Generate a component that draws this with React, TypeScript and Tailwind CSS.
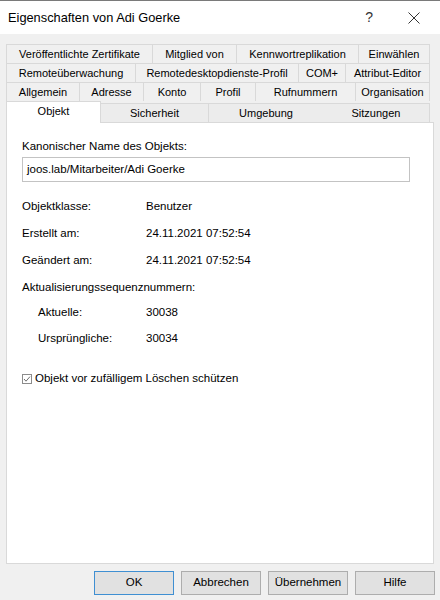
const tabRows: { label: string; w: number }[][] = [
  [
    { label: "Veröffentlichte Zertifikate", w: 146 },
    { label: "Mitglied von", w: 84 },
    { label: "Kennwortreplikation", w: 122 },
    { label: "Einwählen", w: 72 },
  ],
  [
    { label: "Remoteüberwachung", w: 129 },
    { label: "Remotedesktopdienste-Profil", w: 163 },
    { label: "COM+", w: 47 },
    { label: "Attribut-Editor", w: 85 },
  ],
  [
    { label: "Allgemein", w: 73 },
    { label: "Adresse", w: 64 },
    { label: "Konto", w: 57 },
    { label: "Profil", w: 55 },
    { label: "Rufnummern", w: 100 },
    { label: "Organisation", w: 75 },
  ],
];

const bottomTabs = [
  { label: "Sicherheit", w: 107 },
  { label: "Umgebung", w: 115 },
  { label: "Sitzungen", w: 107 },
];

function Tab({ label, w, last }: { label: string; w: number; last: boolean }) {
  return (
    <div
      className={`flex h-[19px] items-center justify-center border-t border-l border-[#d9d9d9] bg-[#f0f0f0] text-[11px] leading-none ${
        last ? "border-r" : ""
      }`}
      style={{ width: w }}
    >
      {label}
    </div>
  );
}

function InfoRow({ label, value, indent, className }: { label: string; value: string; indent?: boolean; className: string }) {
  return (
    <div className={`flex h-[16px] items-center ${className}`}>
      <div className={indent ? "w-[124px] pl-[16px]" : "w-[124px]"}>{label}</div>
      <div>{value}</div>
    </div>
  );
}

function Button({ label, primary }: { label: string; primary?: boolean }) {
  return (
    <button
      className={`h-[24px] w-[80px] border bg-[#e1e1e1] text-[11.5px] text-black ${
        primary ? "border-[#3f8fd2]" : "border-[#adadad]"
      }`}
    >
      {label}
    </button>
  );
}

export default function App() {
  return (
    <div className="flex h-[600px] w-[440px] flex-col bg-[#f0f0f0] font-['Liberation_Sans',Arial,sans-serif] text-[11.5px] text-black">
      {/* title bar */}
      <div className="flex h-[34px] items-center border-t border-[#7a7a7a] bg-white pl-[8px]">
        <span className="text-[12.8px]">Eigenschaften von Adi Goerke</span>
        <span className="ml-auto mr-[35px] text-[14px] text-[#333]">?</span>
        <svg width="12" height="12" viewBox="0 0 12 12" className="mr-[20px]">
          <path d="M0.5 0.5 L11.5 11.5 M11.5 0.5 L0.5 11.5" stroke="#333" strokeWidth="1" />
        </svg>
      </div>

      <div className="pl-[6px] pt-[10px]">
        {tabRows.map((row, i) => (
          <div key={i} className="flex">
            {row.map((t, j) => (
              <Tab key={t.label} label={t.label} w={t.w} last={j === row.length - 1} />
            ))}
          </div>
        ))}
        <div className="flex h-[21px] items-end text-[11px]">
          <div className="relative z-10 -mb-px flex h-[22px] w-[95px] items-center justify-center border-x border-t border-[#d9d9d9] bg-white pb-[2px]">
            Objekt
          </div>
          {bottomTabs.map((t, j) => (
            <div
              key={t.label}
              className={`flex h-[19px] items-center justify-center border-t border-[#d9d9d9] bg-[#ececec] ${
                j === bottomTabs.length - 1 ? "border-r" : "border-l"
              } ${j === 0 ? "border-l-0" : ""}`}
              style={{ width: t.w }}
            >
              {t.label}
            </div>
          ))}
        </div>

        {/* Objekt page */}
        <div className="h-[442px] w-[428px] border border-[#d9d9d9] bg-white pl-[15px] pt-[15px]">
          <div className="h-[16px] leading-[16px]">Kanonischer Name des Objekts:</div>
          <div className="mt-[3px] flex h-[25px] w-[388px] items-center border border-[#c3c3c3] pl-[4px]">
            joos.lab/Mitarbeiter/Adi Goerke
          </div>
          <InfoRow label="Objektklasse:" value="Benutzer" className="mt-[17px]" />
          <InfoRow label="Erstellt am:" value="24.11.2021 07:52:54" className="mt-[11px]" />
          <InfoRow label="Geändert am:" value="24.11.2021 07:52:54" className="mt-[11px]" />
          <div className="mt-[10px] h-[16px] leading-[16px]">Aktualisierungssequenznummern:</div>
          <InfoRow label="Aktuelle:" value="30038" indent className="mt-[10px]" />
          <InfoRow label="Ursprüngliche:" value="30034" indent className="mt-[10px]" />
          <div className="mt-[24px] flex h-[16px] items-center gap-[3px]">
            <svg width="10" height="10" viewBox="0 0 10 10">
              <rect x="0.5" y="0.5" width="9" height="9" fill="white" stroke="#8c8c8c" />
              <path d="M2 5 L4 7.2 L8 2.6" fill="none" stroke="#6e6e6e" strokeWidth="1" />
            </svg>
            <span>Objekt vor zufälligem Löschen schützen</span>
          </div>
        </div>
      </div>

      <div className="mt-[7px] flex justify-end gap-[7px] pr-[5px]">
        <Button label="OK" primary />
        <Button label="Abbrechen" />
        <Button label="Übernehmen" />
        <Button label="Hilfe" />
      </div>
    </div>
  );
}
